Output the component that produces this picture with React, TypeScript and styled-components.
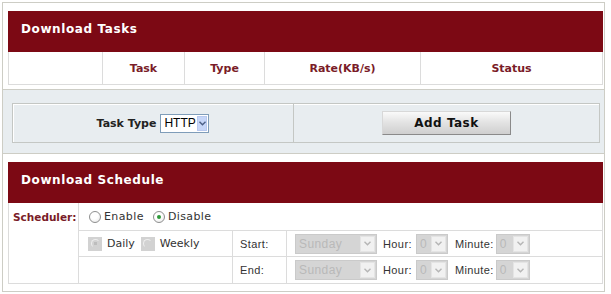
import styled, { createGlobalStyle } from "styled-components"

const Global = createGlobalStyle`
  html, body { margin: 0; padding: 0; background: #fff; }
  body { font-family: "DejaVu Sans", Verdana, sans-serif; }
`

const Frame = styled.div`
  box-sizing: border-box;
  width: 603px;
  margin: 2px 0 0 2px;
  border: 1px solid #cdcdc5;
  background: #fff;
`

const Panel = styled.section<{ $tint?: boolean; $pad: string; $last?: boolean }>`
  padding: ${({ $pad }) => $pad};
  background: ${({ $tint }) => ($tint ? "#e8edf0" : "#fff")};
  border-bottom: ${({ $last }) => ($last ? "none" : "1px solid #cdcdc5")};
`

const Banner = styled.h2`
  box-sizing: border-box;
  margin: 0;
  height: 41px;
  display: flex;
  align-items: center;
  padding: 0 0 6px 13px;
  background: #7c0914;
  color: #fff;
  font-size: 12px;
  font-weight: bold;
  letter-spacing: 0.6px;
`

const HeadGrid = styled.div`
  display: grid;
  grid-template-columns: 93px 81px 79px 155px 1fr;
  gap: 1px;
  background: #dcdcdc;
  border: 1px solid #dcdcdc;
  border-top: none;
`

const HeadCell = styled.div`
  height: 32px;
  background: #fff;
  display: flex;
  align-items: center;
  justify-content: center;
  color: #7a1c28;
  font-size: 11px;
  font-weight: bold;
`

const ToolBox = styled.div`
  display: grid;
  grid-template-columns: 280px 1fr;
  border: 1px solid #c4c7c4;
  box-shadow: inset 1px 1px 0 #fff;
`

const ToolCell = styled.div<{ $divider?: boolean }>`
  height: 38px;
  display: flex;
  align-items: center;
  justify-content: center;
  gap: 4px;
  border-left: ${({ $divider }) => ($divider ? "1px solid #c4c7c4" : "none")};
`

const FieldLabel = styled.span`
  font-size: 11px;
  font-weight: bold;
  color: #222;
`

const Select = styled.span<{ $w: number; $disabled?: boolean }>`
  box-sizing: border-box;
  width: ${({ $w }) => $w}px;
  height: ${({ $disabled }) => ($disabled ? 20 : 19)}px;
  display: inline-flex;
  border: 1px solid ${({ $disabled }) => ($disabled ? "#cacaca" : "#7f9db9")};
  background: ${({ $disabled }) => ($disabled ? "#d5d5d5" : "#fff")};
  font-family: "Liberation Sans", Arial, sans-serif;
  font-size: 12px;
  color: ${({ $disabled }) => ($disabled ? "#b9b9b9" : "#000")};
`

const SelectText = styled.span`
  flex: 1;
  display: flex;
  align-items: center;
  padding-left: 3px;
`

const SelectButton = styled.span<{ $disabled?: boolean }>`
  width: 15px;
  display: flex;
  align-items: center;
  justify-content: center;
  margin: 1px;
  background: ${({ $disabled }) => ($disabled ? "#f1f1f1" : "#c6d6f8")};
  border: 1px solid ${({ $disabled }) => ($disabled ? "#e4e4e4" : "#b8c9ef")};
  box-sizing: border-box;
`

const Chevron = ({ color }: { color: string }) => (
  <svg width="7" height="5" viewBox="0 0 7 5">
    <path d="M0.5 0.8 L3.5 3.8 L6.5 0.8" fill="none" stroke={color} strokeWidth="1.4" />
  </svg>
)

const Dropdown = ({ value, w, disabled }: { value: string; w: number; disabled?: boolean }) => (
  <Select $w={w} $disabled={disabled}>
    <SelectText>{value}</SelectText>
    <SelectButton $disabled={disabled}>
      <Chevron color={disabled ? "#b5b5b5" : "#4b5f86"} />
    </SelectButton>
  </Select>
)

const AddButton = styled.button`
  width: 129px;
  height: 24px;
  border: 1px solid #8a8a8a;
  border-top-color: #d8d8d8;
  border-left-color: #d8d8d8;
  background: linear-gradient(#fafafa 0%, #e4e4e4 45%, #cfcfcf 100%);
  font-family: "DejaVu Sans", Verdana, sans-serif;
  font-size: 12px;
  font-weight: bold;
  letter-spacing: 0.5px;
  color: #111;
  padding: 0;
`

const ScheduleGrid = styled.div`
  display: grid;
  grid-template-columns: 69px 153px 53px 1fr;
  grid-template-rows: 27px 25px 26px;
  gap: 1px;
  background: #dcdcdc;
  border: 1px solid #dcdcdc;
  border-top: none;
`

const Cell = styled.div<{ $span?: string; $pad?: number }>`
  background: #fff;
  display: flex;
  align-items: center;
  padding-left: ${({ $pad }) => $pad ?? 7}px;
  grid-column: ${({ $span }) => $span ?? "auto"};
  font-family: "Liberation Sans", Arial, sans-serif;
  font-size: 11px;
  letter-spacing: 0.4px;
  color: #333;
`

const LabelCell = styled.div`
  grid-row: 1 / span 3;
  background: #fff;
  padding: 8px 0 0 4px;
  color: #7a1c28;
  font-size: 10.5px;
  font-weight: bold;
`

const Choice = styled.label<{ $tight?: boolean }>`
  display: inline-flex;
  align-items: center;
  gap: 3px;
  margin-right: ${({ $tight }) => ($tight ? 6 : 9)}px;
  font-family: "DejaVu Sans", Verdana, sans-serif;
  font-size: 11px;
  letter-spacing: ${({ $tight }) => ($tight ? 0 : 0.4)}px;
  color: #333;
`

const Radio = styled.span<{ $on?: boolean }>`
  box-sizing: border-box;
  width: 12px;
  height: 12px;
  border-radius: 50%;
  border: 1px solid #8e8f8f;
  background: radial-gradient(circle at 40% 35%, #fff 40%, #e3e3e3 100%);
  display: inline-flex;
  align-items: center;
  justify-content: center;
  &::after {
    content: "";
    width: 4px;
    height: 4px;
    border-radius: 50%;
    background: ${({ $on }) => ($on ? "#2f9a3a" : "transparent")};
  }
`

const DimRadio = styled.span<{ $on?: boolean }>`
  width: 14px;
  height: 14px;
  background: #d2d2d2;
  display: inline-flex;
  align-items: center;
  justify-content: center;
  margin-right: 2px;
  &::before {
    content: "";
    box-sizing: border-box;
    width: 9px;
    height: 9px;
    border-radius: 50%;
    border: 1px solid #eeeeee;
    border-right-color: transparent;
    border-bottom-color: transparent;
    background: ${({ $on }) => ($on ? "radial-gradient(circle, #bdbdbd 30%, transparent 36%)" : "none")};
  }
`

const FormText = styled.span<{ $ml: number; $mr: number }>`
  margin: 0 ${({ $mr }) => $mr}px 0 ${({ $ml }) => $ml}px;
`

const TimeRow = ({ label }: { label: string }) => (
  <>
    <Cell>{label}</Cell>
    <Cell $pad={8}>
      <Dropdown value="Sunday" w={82} disabled />
      <FormText $ml={6} $mr={4}>Hour:</FormText>
      <Dropdown value="0" w={32} disabled />
      <FormText $ml={7} $mr={2}>Minute:</FormText>
      <Dropdown value="0" w={34} disabled />
    </Cell>
  </>
)

const columns = ["", "Task", "Type", "Rate(KB/s)", "Status"]

export default function App() {
  return (
    <>
      <Global />
      <Frame>
        <Panel $pad="8px 1px 4px 5px">
          <Banner>Download Tasks</Banner>
          <HeadGrid>
            {columns.map((c, i) => (
              <HeadCell key={i}>{c}</HeadCell>
            ))}
          </HeadGrid>
        </Panel>

        <Panel $tint $pad="13px 4px 10px 9px">
          <ToolBox>
            <ToolCell>
              <FieldLabel>Task Type</FieldLabel>
              <Dropdown value="HTTP" w={49} />
            </ToolCell>
            <ToolCell $divider>
              <AddButton>Add Task</AddButton>
            </ToolCell>
          </ToolBox>
        </Panel>

        <Panel $pad="8px 1px 7px 5px" $last>
          <Banner>Download Schedule</Banner>
          <ScheduleGrid>
            <LabelCell>Scheduler:</LabelCell>
            <Cell $span="2 / span 3" $pad={10}>
              <Choice><Radio />Enable</Choice>
              <Choice><Radio $on />Disable</Choice>
            </Cell>
            <Cell $pad={9}>
              <Choice $tight><DimRadio $on />Daily</Choice>
              <Choice $tight><DimRadio />Weekly</Choice>
            </Cell>
            <TimeRow label="Start:" />
            <Cell />
            <TimeRow label="End:" />
          </ScheduleGrid>
        </Panel>
      </Frame>
    </>
  )
}
